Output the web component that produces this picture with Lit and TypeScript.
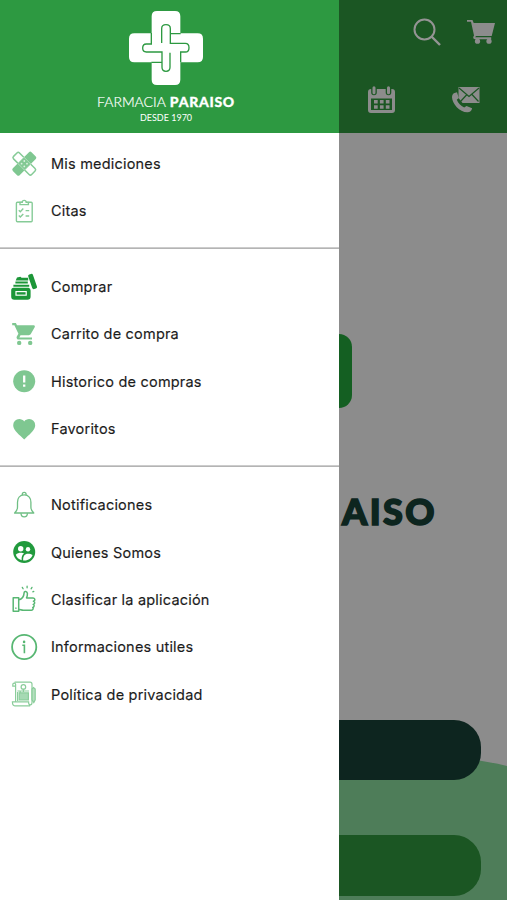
import { LitElement, html, css, svg, type TemplateResult } from "lit";
import { customElement } from "lit/decorators.js";

// Every menu icon is drawn in a 28x28 box.
const icons: Record<string, TemplateResult> = {
  bandage: svg`<g transform="translate(.3 .7) rotate(45 14 14)">
    <rect x="1.2" y="9.8" width="25.6" height="8.4" rx="1.8" fill="#fff" stroke="#86cb97" stroke-width="1.5"/></g>
    <g transform="translate(.3 .7) rotate(-45 14 14)"><rect x="0.8" y="9.2" width="26.4" height="9.6" rx="1.8" fill="#7fc791"/>
    <rect x="9.6" y="9.2" width="8.8" height="9.6" fill="#83c994" stroke="#c2e5ca" stroke-width=".7"/></g>
    <g fill="#dcf1e0"><circle cx="14.3" cy="12" r=".9"/><circle cx="14.3" cy="17.4" r=".9"/><circle cx="11.6" cy="14.7" r=".9"/><circle cx="17" cy="14.7" r=".9"/></g>`,
  clipboard: svg`<g fill="none" stroke="#86cb97" stroke-width="1.4">
    <rect x="6.4" y="5.2" width="15.8" height="19.6" rx="1"/>
    <path fill="#fff" d="M10 7.6V5.4h2.2a2 2 0 0 1 4 0h2.2v2.2z"/>
    <path d="M8.8 13.2l1.5 1.5 3-3.2M15.6 13.6h3.6M8.8 18.6l1.5 1.5 3-3.2M15.6 19h3.6"/></g>`,
  jar: svg`<g fill="#1c9638"><path d="M7 4.6l3.4-.8 1.2 1h6.6v2.8H5.7z"/><path d="M5.4 8.6h12.4v2H5.4zM3.4 11.7h15.8v2.1H3.4z"/>
    <path fill-rule="evenodd" d="M4 14.8h14.6a2.6 2.6 0 0 1 2 2.6v6.2a3.2 3.2 0 0 1-3.2 3.2H4.4a3.2 3.2 0 0 1-3.2-3.2v-6.2a2.6 2.6 0 0 1 2.8-2.6zM5.4 18v4.8h11.4v-4.8z"/>
    <rect x="6.6" y="19.2" width="9" height="2.4"/>
    <rect x="20.1" y=".8" width="5" height="15.4" rx="1.6" transform="rotate(-19 22.6 8.5)"/></g>`,
  cart: svg`<g transform="translate(2.2 2.5)"><path fill="#7fc791" d="M7 18.2a2.2 2.2 0 1 0 0 4.4 2.2 2.2 0 0 0 0-4.4zM0 .6v2.2h2.2l4 8.4-1.6 2.7c-.8 1.4.3 3.2 1.9 3.2h13.3v-2.2H7.2l1.1-2.2h8.3c.8 0 1.6-.5 2-1.1l4-7.2c.3-.8-.2-1.6-1-1.6H4.8L3.7.6zM18 18.2a2.2 2.2 0 1 0 0 4.4 2.2 2.2 0 0 0 0-4.4z"/></g>`,
  alert: svg`<circle cx="14.2" cy="14.2" r="11" fill="#7fc791"/><path stroke="#fff" stroke-width="2.3" d="M14.2 8.6v6.8M14.2 17.4v2.3"/>`,
  heart: svg`<path fill="#7fc791" d="M14.2 24.4l-1.6-1.5C7 17.8 3.2 14.4 3.2 10.2a6 6 0 0 1 6.1-6.1c1.9 0 3.8.9 4.9 2.3 1.1-1.4 3-2.3 4.9-2.3a6 6 0 0 1 6.1 6.1c0 4.2-3.8 7.6-9.4 12.7z"/>`,
  bell: svg`<g fill="none" stroke="#6fbf84" stroke-width="1.3" stroke-linejoin="round">
    <path d="M12.3 4V3.3a1.9 1.9 0 0 1 3.8 0V4M14.2 3.9c-4.6 0-6.7 3.4-6.7 7.3v4.7c0 2.5-.7 4.3-2.9 6.1h19.2c-2.2-1.8-2.9-3.6-2.9-6.1v-4.7c0-3.9-2.1-7.3-6.7-7.3z"/>
    <path d="M11 22.2a3.2 3.6 0 0 0 6.4 0"/></g>`,
  people: svg`<circle cx="14.2" cy="14" r="11" fill="#219a3d"/><g fill="#fff"><circle cx="10.7" cy="10.7" r="2.7"/><circle cx="18" cy="11.3" r="2.2"/>
    <path d="M5.8 16.8c1.4-1.6 3.2-2.1 5-2.1 1.2 0 2.5.3 3.3.8-2 1.3-2.6 3-2.5 6.7-3-.8-5-2.8-5.8-5.4z"/>
    <path d="M13.2 22.5c-.3-4.5 1.5-6.8 4.9-6.8 1.6 0 3.2.4 4.5 1.4-1.2 3.4-4.8 6-9.4 5.4z"/></g>`,
  thumb: svg`<g fill="none" stroke="#58b773" stroke-width="1.5" stroke-linejoin="round" stroke-linecap="round">
    <path d="M3.2 12.8h5.5v13.4H3.2zM8.7 15c3.2-.7 5.2-3.4 5.5-7.6.2-1.6 3-1.2 3.2 1 .1 1.7-.3 3.2-.9 4.5h6.6c2.3.2 2.3 3.1.3 3.3 1.8.3 1.7 3.1-.2 3.2 1.5.4 1.2 2.8-.5 3 1 .7.4 2.9-1.2 2.9h-8.1c-2 0-3-.9-4.7-1"/>
    <path stroke-width="1.3" d="M5.9 23v.4M17.1 1.2v1.6M12.3 2.4l.8 1.4M22 2.4l-.9 1.4M23.8 6.4l-1 .4"/></g>`,
  info: svg`<circle cx="14.2" cy="14" r="12.1" fill="none" stroke="#58b773" stroke-width="1.8"/>
    <path fill="none" stroke="#58b773" stroke-width="1.6" d="M12.3 12.3h2.1v8"/><circle cx="14.1" cy="8.9" r="1.3" fill="#58b773"/>`,
  policy: svg`<g fill="none" stroke="#8bcd9b" stroke-width="1.2">
    <path d="M5.6 21.8V4.2c0-1.4-2.8-1.4-2.8.2v1.8h2.8M4.6 2.2h15.4c1.4 0 2 .7 2 2v18.4c0 3-3.4 3-3.4 0v-.8H2.4c0 3 .8 4 2.4 4h15.4"/>
    <circle cx="13.4" cy="6.9" r="2.3"/><path fill="#a6d9b3" d="M9.2 12.8h9.2v7H9.2z"/><path d="M7.4 11h11.6M7.6 12v9M13.4 9v3M10.2 13v-2"/>
    <path fill="#b5dfbf" d="M23.4 7.5l1.8 1.6v10.8l-1.4 2.6-1.8-2.6V9.1z"/></g>`,
};

const sections: [string, string][][] = [
  [["bandage", "Mis mediciones"], ["clipboard", "Citas"]],
  [["jar", "Comprar"], ["cart", "Carrito de compra"], ["alert", "Historico de compras"], ["heart", "Favoritos"]],
  [["bell", "Notificaciones"], ["people", "Quienes Somos"], ["thumb", "Clasificar la aplicación"], ["info", "Informaciones utiles"], ["policy", "Política de privacidad"]],
];

@customElement("app-root")
export class AppRoot extends LitElement {
  static styles = css`
    :host { display: flex; width: 507px; height: 900px; overflow: hidden; font-family: Inter, "Liberation Sans", sans-serif; }
    svg { display: block; flex: none; }
    .drawer { width: 339px; flex: none; background: #fff; color: #1c1c1c; }
    .brand { height: 133px; box-sizing: border-box; padding-top: 11px; background: #2d9941; color: #fff;
      display: flex; flex-direction: column; align-items: center; padding-right: 7px; font-family: Lato, sans-serif; white-space: nowrap; }
    .name { font-size: 14px; font-weight: 300; line-height: 16px; margin-top: 9px; display: flex; gap: 4px; }
    .name b { font-weight: 900; letter-spacing: .7px; -webkit-text-stroke: .3px #fff; }
    .name span { -webkit-text-stroke: .2px #fff; }
    .since { font-size: 9px; line-height: 12px; margin-top: 2px; }
    .section { list-style: none; margin: 0; padding: 14px 0 13.7px; border-bottom: 1px solid #b4b4b4; box-shadow: 0 -1px 0 #ccc inset; }
    .section:first-of-type { padding-top: 6.6px; }
    .section:last-of-type { border: 0; box-shadow: none; }
    .item { display: flex; align-items: center; gap: 13px; height: 47.35px; padding-left: 10px; font-size: 14.5px; letter-spacing: .2px; white-space: nowrap; -webkit-text-stroke: .15px #1c1c1c; }
    .page { flex: 1; min-width: 0; background: #8c8c8c; display: flex; flex-direction: column; }
    .bar { height: 133px; box-sizing: border-box; background: #1b5623; display: grid; grid-template-rows: 28px 27px; row-gap: 40px; padding: 18px 12px 0 29px; }
    .row { display: flex; justify-content: space-between; }
    .top { padding-left: 45px; }
    .bottom { padding-right: 15px; }
    .tile { width: 13px; height: 74px; margin-top: 201px; background: #145f22; border-radius: 0 13px 13px 0; }
    .title { font-family: Lato, sans-serif; font-weight: 900; font-size: 36px; line-height: 40px; letter-spacing: 2.4px; color: #0d251f; -webkit-text-stroke: 1.6px #0d251f; margin: 83px 0 0 3px; }
    .actions { position: relative; margin-top: 189px; flex: 1; display: flex; flex-direction: column; gap: 55px; }
    .wave { position: absolute; left: 0; top: 0; }
    .pill { position: relative; width: 142px; height: 60.4px; border-radius: 0 27px 27px 0; background: #0d251f; }
    .pill.green { background: #1b5623; }
  `;

  render() {
    return html`
      <nav class="drawer">
        <header class="brand">
          <svg width="74" height="74" viewBox="147 34 222 222">
            <path fill="#fff" d="M231 34h54q16 0 16 16v51h52q16 0 16 16v55q0 16-16 16h-52v52q0 16-16 16h-54q-16 0-16-16v-52h-52q-16 0-16-16v-55q0-16 16-16h52V50q0-16 16-16z"/>
            <path fill="none" stroke="#2d9941" stroke-width="4" d="M214 100v33h-15q-11 0-11 12t11 12h47v46q0 12 12 12t12-12v-44M302 188v-31h14q11 0 11-13t-11-13h-45V87q0-12-13-12t-13 12v43M302 102h-31M214 188h32"/>
          </svg>
          <div class="name"><span>FARMACIA</span><b>PARAISO</b></div>
          <div class="since">DESDE 1970</div>
        </header>
        ${sections.map((items) => html`<ul class="section">
          ${items.map(([icon, label]) => html`<li class="item">
            <svg width="28" height="28" viewBox="0 0 28 28">${icons[icon]}</svg><span>${label}</span></li>`)}
        </ul>`)}
      </nav>
      <main class="page">
        <header class="bar">
          <div class="row top">
            <svg width="29" height="28" viewBox="0 0 29 28"><g fill="none" stroke="#949494" stroke-width="2"><circle cx="11.5" cy="11.5" r="10"/><path stroke-width="2.4" d="M18.5 18.5l8.5 8.5"/></g></svg>
            <svg width="28" height="28" viewBox="0 0 28 28"><g fill="#8c8c8c"><path d="M0 2h5.5l1.2 3H28l-3.3 13H9l-.8 1.3h16v1.9H8c-2 0-2.3-2-1-3.7L4 3.8H0z"/><circle cx="10.5" cy="23.2" r="2.6"/><circle cx="22" cy="23.2" r="2.6"/></g></svg>
          </div>
          <div class="row bottom">
            <svg width="27" height="27" viewBox="0 0 27 27"><path fill="#8c8c8c" fill-rule="evenodd" d="M3 3h21a3 3 0 0 1 3 3v18a3 3 0 0 1-3 3H3a3 3 0 0 1-3-3V6a3 3 0 0 1 3-3zM3 12.5v11.5h21v-11.5z"/>
              <path stroke="#1b5623" stroke-width="5.6" stroke-linecap="round" d="M6 1v5.5M20.5 1v5.5"/><path stroke="#8c8c8c" stroke-width="3" stroke-linecap="round" d="M6 1.8v5M20.5 1.8v5"/>
              <path stroke="#8c8c8c" stroke-width="3.5" stroke-dasharray="3.7 2.2" d="M6 15.8h15.5M6 20.9h15.5"/></svg>
            <svg width="28" height="27" viewBox="0 0 28 27"><path fill="#8c8c8c" d="M2.5 7L5 6.2 6.8 12l-2 1.8c1.4 3.5 3.8 6 7.4 7.6l2.3-1.5 5.6 2.3c-.4 2.5-2.3 4.2-4.8 4.1C7.5 26 .2 17.8 0 11.2 0 9 1 7.6 2.5 7z"/>
              <path fill="#8c8c8c" d="M6.5 1h21v16h-17L6.5 12z"/><path fill="none" stroke="#1b5623" stroke-width="1.2" d="M7 2l10 8.5L27 2M8.5 15.5l6-6.5M26.5 15.5l-6.5-7"/></svg>
          </div>
        </header>
        <div class="tile"></div>
        <div class="title">AISO</div>
        <div class="actions">
          <svg class="wave" width="168" height="180" viewBox="0 0 168 180"><path fill="#4e7d59" d="M0 34Q80 28 143 41Q156 43 168 46V180H0z"/></svg>
          <div class="pill"></div>
          <div class="pill green"></div>
        </div>
      </main>`;
  }
}
